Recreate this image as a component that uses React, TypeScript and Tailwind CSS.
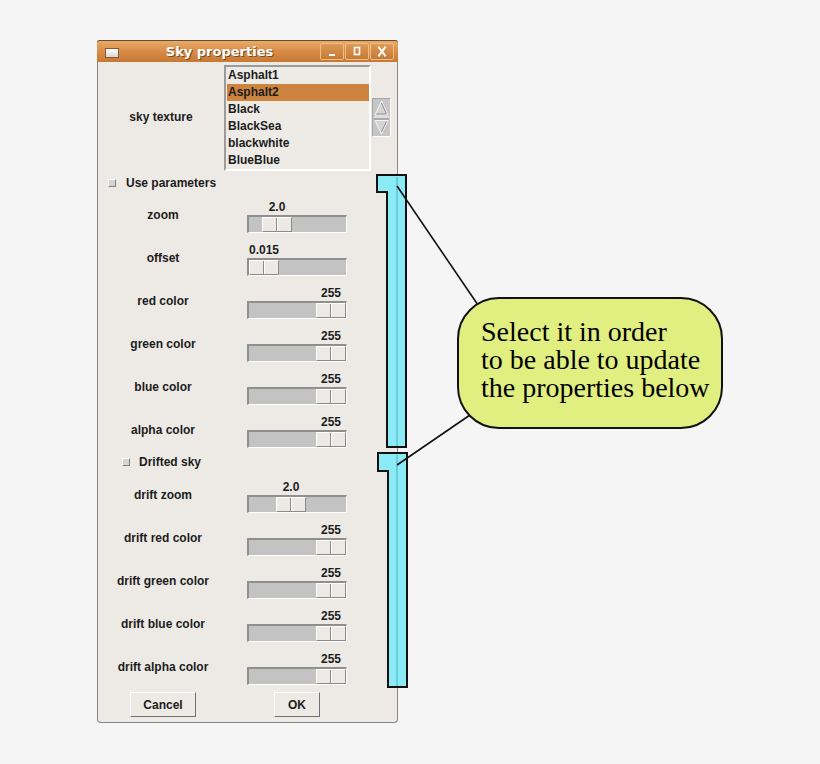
const ui = "font-['Liberation_Sans',Arial,sans-serif]";

const textures = ["Asphalt1", "Asphalt2", "Black", "BlackSea", "blackwhite", "BlueBlue"];

const params = [
  { name: "zoom", value: "2.0", offset: 13 },
  { name: "offset", value: "0.015", offset: 0 },
  { name: "red color", value: "255", offset: 67 },
  { name: "green color", value: "255", offset: 67 },
  { name: "blue color", value: "255", offset: 67 },
  { name: "alpha color", value: "255", offset: 67 },
];

const drift = [
  { name: "drift zoom", value: "2.0", offset: 27 },
  { name: "drift red color", value: "255", offset: 67 },
  { name: "drift green color", value: "255", offset: 67 },
  { name: "drift blue color", value: "255", offset: 67 },
  { name: "drift alpha color", value: "255", offset: 67 },
];

function Checkbox() {
  return (
    <div className="w-[8px] h-[8px] bg-[#d6d3ce] border border-t-white border-l-white border-b-[#7d7d7d] border-r-[#7d7d7d]" />
  );
}

function SliderRow({ name, value, offset }: { name: string; value: string; offset: number }) {
  return (
    <div className="flex h-[43px]">
      <div className="w-[130px] flex items-center justify-center text-[12px] font-bold text-[#1c1c1c]">{name}</div>
      <div className="flex flex-col pt-[7px] pl-[19px]">
        <div className="h-[15px] flex">
          <div style={{ width: offset + 2 }} />
          <div className="w-[30px] flex justify-center text-[12px] font-bold leading-[15px] whitespace-nowrap text-[#1c1c1c]">
            {value}
          </div>
        </div>
        <div className="w-[100px] h-[18px] flex bg-[#c3c3c3] border-t-2 border-l-2 border-b border-r border-t-[#8f8f8f] border-l-[#8f8f8f] border-b-white border-r-white">
          <div style={{ width: offset }} />
          <div className="w-[30px] h-full flex bg-[#edeae6] border border-t-white border-l-white border-b-[#8a8a8a] border-r-[#8a8a8a]">
            <div className="flex-1" />
            <div className="w-[2px] border-l border-r border-l-[#8a8a8a] border-r-white" />
            <div className="flex-1" />
          </div>
        </div>
      </div>
    </div>
  );
}

function TitleButton({ kind }: { kind: "min" | "max" | "close" }) {
  return (
    <div className="w-[24px] h-[17px] rounded-[2px] border border-[#f2bd85] bg-gradient-to-b from-[#dd9a56] to-[#c67a36] flex items-center justify-center">
      <svg width="12" height="11" viewBox="0 0 12 11">
        {kind === "min" && <rect x="3" y="8" width="6" height="2" fill="#fff" />}
        {kind === "max" && <rect x="3.5" y="1.5" width="5" height="7" fill="none" stroke="#fff" strokeWidth="1.6" />}
        {kind === "close" && (
          <path d="M3 1.5 L9 9.5 M9 1.5 L3 9.5" stroke="#fff" strokeWidth="2" strokeLinecap="square" />
        )}
      </svg>
    </div>
  );
}

export default function App() {
  return (
    <div className={`relative w-[820px] h-[764px] bg-[#f5f5f5] overflow-hidden ${ui}`}>
      <div className="pt-[40px] pl-[97px]">
        <div className="w-[301px] flex flex-col bg-[#edeae6] border-x border-b border-[#858585] rounded-b-[4px] rounded-t-[3px]">
          {/* title bar */}
          <div className="h-[22px] -mx-px flex items-center px-[8px] gap-[4px] rounded-t-[3px] border-t border-[#6b4a2a] bg-gradient-to-b from-[#e9aa68] via-[#d88c47] to-[#c67935]">
            <div className="w-[14px] h-[10px] mt-[3px] border border-[#8a5a2c] bg-gradient-to-b from-white to-[#d6d6d6]" />
            <div className="flex-1 text-center font-['DejaVu_Sans',sans-serif] font-bold text-[13px] text-white [text-shadow:1px_1px_0_#7a4a1e]">
              Sky properties
            </div>
            <div className="flex gap-[1px] mr-[-4px]">
              <TitleButton kind="min" />
              <TitleButton kind="max" />
              <TitleButton kind="close" />
            </div>
          </div>

          {/* sky texture */}
          <div className="flex h-[110px]">
            <div className="w-[126px] flex items-center justify-center text-[12px] font-bold text-[#1c1c1c]">sky texture</div>
            <div className="mt-[3px] w-[147px] h-[106px] border-2 border-t-[#9c9c9c] border-l-[#9c9c9c] border-b-white border-r-white bg-[#eeebe7] pl-px">
              {textures.map((t) => (
                <div
                  key={t}
                  className={`h-[17px] leading-[17px] text-[12px] font-bold text-[#1c1c1c] pl-[1px] ${t === "Asphalt2" ? "bg-[#cc843f]" : ""}`}
                >
                  {t}
                </div>
              ))}
            </div>
            <div className="ml-[1px] mt-[36px] w-[19px] h-[39px] bg-[#c6c6c6] border border-t-[#a3a3a3] border-l-[#a3a3a3] border-b-white border-r-white">
              <svg width="17" height="37" viewBox="0 0 17 37">
                <path d="M8.5 2 L15 16 L2 16 Z" fill="#d4d4d4" stroke="#f4f4f4" strokeWidth="1" />
                <path d="M8.5 4 L13.5 15 L3.5 15" fill="none" stroke="#8d8d8d" strokeWidth="1" />
                <rect x="1" y="17.5" width="15" height="1" fill="#f4f4f4" />
                <rect x="1" y="19.5" width="15" height="1" fill="#8d8d8d" />
                <path d="M2 21.5 L15 21.5 L8.5 35 Z" fill="#d4d4d4" stroke="#f4f4f4" strokeWidth="1" />
                <path d="M13.5 22.5 L8.5 33" fill="none" stroke="#8d8d8d" strokeWidth="1" />
              </svg>
            </div>
          </div>

          {/* use parameters */}
          <div className="h-[21px] flex items-center pl-[10px] gap-[10px]">
            <Checkbox />
            <span className="text-[12px] font-bold text-[#1c1c1c]">Use parameters</span>
          </div>

          {params.map((p) => (
            <SliderRow key={p.name} {...p} />
          ))}

          {/* drifted sky */}
          <div className="h-[22px] flex items-center pl-[24px] gap-[9px]">
            <Checkbox />
            <span className="text-[12px] font-bold text-[#1c1c1c]">Drifted sky</span>
          </div>

          {drift.map((p) => (
            <SliderRow key={p.name} {...p} />
          ))}

          {/* buttons */}
          <div className="flex mt-[4px] mb-[5px]">
            <div className="ml-[32px] w-[66px] h-[25px] flex items-center justify-center text-[12px] font-bold text-[#1c1c1c] bg-[#edeae6] border border-t-white border-l-white border-b-[#6f6f6f] border-r-[#6f6f6f]">
              Cancel
            </div>
            <div className="ml-[78px] w-[46px] h-[25px] flex items-center justify-center text-[12px] font-bold text-[#1c1c1c] bg-[#edeae6] border border-t-white border-l-white border-b-[#6f6f6f] border-r-[#6f6f6f]">
              OK
            </div>
          </div>
        </div>
      </div>

      {/* annotation overlay */}
      <svg className="absolute inset-0 pointer-events-none" width="820" height="764" viewBox="0 0 820 764">
        <path d="M377 175 L406 175 L406 447 L387 447 L387 192 L377 192 Z" fill="#8aebf6" stroke="#111" strokeWidth="2" />
        <line x1="397" y1="177" x2="397" y2="446" stroke="#5fc4d0" strokeWidth="1.5" />
        <path d="M378 453 L407 453 L407 687 L388 687 L388 471 L378 471 Z" fill="#8aebf6" stroke="#111" strokeWidth="2" />
        <line x1="397" y1="455" x2="397" y2="686" stroke="#5fc4d0" strokeWidth="1.5" />
        <line x1="397" y1="186" x2="478" y2="305" stroke="#111" strokeWidth="1.6" />
        <line x1="470" y1="415" x2="397" y2="465" stroke="#111" strokeWidth="1.6" />
      </svg>
      <div className="absolute left-[457px] top-[297px] w-[266px] h-[132px] rounded-[42px] border-2 border-[#111] bg-[#e1ef80] pl-[22px] pt-[19px] font-['Liberation_Serif','Times_New_Roman',serif] text-[28px] leading-[28px] text-black">
        <div>Select it in order</div>
        <div>to be able to update</div>
        <div>the properties below</div>
      </div>
    </div>
  );
}
